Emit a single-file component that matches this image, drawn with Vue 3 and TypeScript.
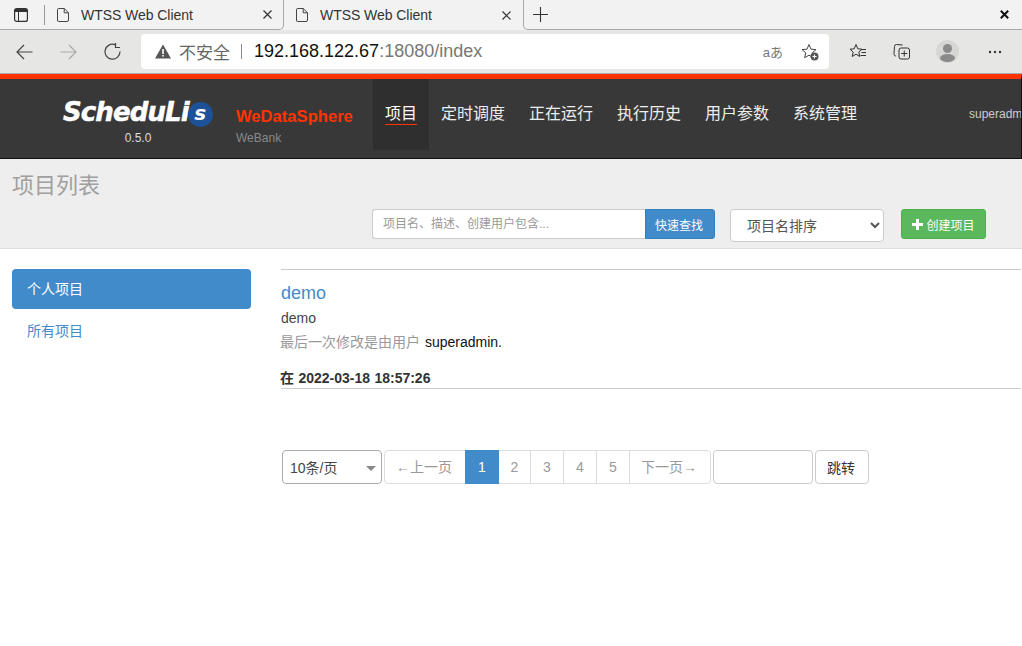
<template>
  <div class="page">
    <div class="tabstrip">
      <div class="tabs-left">
        <svg class="tabs-ic" width="14" height="14" viewBox="0 0 14 14"><rect x=".6" y=".6" width="12.8" height="12.8" rx="2" fill="none" stroke="#333" stroke-width="1.200" /><rect x="1" y="1" width="12" height="3" fill="#333" /><path d="M4.500 4v9.500" stroke="#333" stroke-width="1" /></svg>
        <span class="tab-sep"></span>
        <div class="tab">
          <svg width="12" height="14" viewBox="0 0 12 14"><path d="M1.800.5h5.400l4.300 4.300v7.200a1.500 1.500 0 0 1-1.500 1.500H1.800A1.300 1.300 0 0 1 .5 12V1.800A1.300 1.300 0 0 1 1.800.5zM7.200.5v4.300h4.300" fill="none" stroke="#444" stroke-width="1" /></svg>
          <span class="tab-title">WTSS Web Client</span>
          <svg width="9" height="9" viewBox="0 0 9 9"><path d="M.5.5l8 8M8.500.5l-8 8" stroke="#333" stroke-width="1.200" /></svg>
        </div>
      </div>
      <div class="tab active">
        <svg width="12" height="14" viewBox="0 0 12 14"><path d="M1.800.5h5.400l4.300 4.300v7.200a1.500 1.500 0 0 1-1.500 1.500H1.800A1.300 1.300 0 0 1 .5 12V1.800A1.300 1.300 0 0 1 1.800.5zM7.200.5v4.300h4.300" fill="none" stroke="#444" stroke-width="1" /></svg>
        <span class="tab-title">WTSS Web Client</span>
        <svg width="9" height="9" viewBox="0 0 9 9"><path d="M.5.5l8 8M8.500.5l-8 8" stroke="#333" stroke-width="1.200" /></svg>
      </div>
      <div class="tabs-right">
        <svg class="new-tab" width="15" height="15" viewBox="0 0 15 15"><path d="M7.500 0v15M0 7.500h15" stroke="#333" stroke-width="1.100" /></svg>
        <svg class="win-x" width="9" height="9" viewBox="0 0 9 9"><path d="M.8.8l7.400 7.400M8.200.8L.8 8.200" stroke="#111" stroke-width="2" /></svg>
      </div>
    </div>

    <div class="toolbar">
      <svg class="tb-ic first" width="17" height="16" viewBox="0 0 17 16"><path d="M16.500 8H1M8 1L1 8l7 7" fill="none" stroke="#444" stroke-width="1.200" /></svg>
      <svg class="tb-ic" width="17" height="16" viewBox="0 0 17 16"><path d="M.5 8H16M9 1l7 7-7 7" fill="none" stroke="#aaa" stroke-width="1.200" /></svg>
      <svg class="tb-ic" width="17" height="17" viewBox="0 0 17 17"><path d="M11 1.600A7.500 7.500 0 1 0 16 8.500M11.500 0v4.500H16" fill="none" stroke="#444" stroke-width="1.200" /></svg>
      <div class="address">
        <svg width="16" height="15" viewBox="0 0 16 15"><path d="M8 .5L16 14.500H0z" fill="#555" /><path d="M7.200 5h1.600v5H7.200zM7.200 11h1.600v1.600H7.200z" fill="#fff" /></svg>
        <span class="insecure">不安全</span>
        <span class="addr-sep"></span>
        <span class="url">192.168.122.67<span class="url-dim">:18080/index</span></span>
        <span class="translate">aあ</span>
        <svg class="addr-star" width="18" height="18" viewBox="0 0 18 18"><path d="M8 1.500l2 4.700 5 .4-3.800 3.300 1.200 4.800L8 12.200l-4.400 2.500 1.200-4.800L1 6.600l5-.4z" fill="none" stroke="#444" stroke-width="1" /><circle cx="13.500" cy="13.500" r="4" fill="#555" /><path d="M11.500 13.500h4M13.500 11.500v4" stroke="#fff" stroke-width="1" /></svg>
      </div>
      <svg class="tb-ic fav" width="18" height="18" viewBox="0 0 18 18"><path d="M7 1.500l1.800 4.300 4.200.4-3.200 2.900 1 4.400L7 11.200l-3.800 2.300 1-4.400L1 6.200l4.200-.4z" fill="none" stroke="#333" stroke-width="1" /><path d="M12 6.500h5M12.500 9.500h4.500M11.500 12.500h5.500" stroke="#333" stroke-width="1" /></svg>
      <svg class="tb-ic coll" width="18" height="18" viewBox="0 0 18 18"><path d="M3 13A2 2 0 0 1 1 10.500L1.500 3.500A2 2 0 0 1 3.500 1.500l6 .5" fill="none" stroke="#333" stroke-width="1" /><rect x="6" y="5" width="10.500" height="11" rx="2" fill="none" stroke="#333" stroke-width="1" /><path d="M11.250 7.500v6M8.250 10.500h6" stroke="#333" stroke-width="1" /></svg>
      <svg class="avatar" width="23" height="23" viewBox="0 0 23 23"><circle cx="11.500" cy="11.500" r="11.500" fill="#d6d6d4" /><circle cx="11.500" cy="8.500" r="4.500" fill="#8a8a8a" /><ellipse cx="11.500" cy="18" rx="7.500" ry="4" fill="#8a8a8a" /></svg>
      <svg class="more" width="14" height="4" viewBox="0 0 14 4"><circle cx="2" cy="2" r="1.200" fill="#333" /><circle cx="7" cy="2" r="1.200" fill="#333" /><circle cx="12" cy="2" r="1.200" fill="#333" /></svg>
    </div>

    <header class="navbar">
      <div class="brand">
        <div class="logo"><span class="logo-text">ScheduLi</span><span class="logo-s">s</span></div>
        <div class="version">0.5.0</div>
      </div>
      <div class="org">
        <div class="org-name">WeDataSphere</div>
        <div class="org-sub">WeBank</div>
      </div>
      <nav class="nav">
        <a v-for="(item, i) in navItems" :key="item" class="nav-item" :class="{ active: i === 0 }"><span>{{ item }}</span></a>
      </nav>
      <div class="user">superadmin</div>
    </header>

    <section class="page-head">
      <h1>项目列表</h1>
      <div class="head-actions">
        <div class="search">
          <input class="search-input" placeholder="项目名、描述、创建用户包含..." />
          <button class="search-btn">快速查找</button>
        </div>
        <select class="sort"><option>项目名排序</option></select>
        <button class="create-btn"><span class="plus"></span>创建项目</button>
      </div>
    </section>

    <section class="content">
      <aside class="side">
        <a class="side-item active">个人项目</a>
        <a class="side-item">所有项目</a>
      </aside>
      <main class="main">
        <div class="project">
          <a class="p-name">demo</a>
          <div class="p-desc">demo</div>
          <div class="p-mod">最后一次修改是由用户 <span class="p-user">superadmin.</span></div>
          <div class="p-time">在 2022-03-18 18:57:26</div>
        </div>
        <div class="pager-row">
          <div class="size-select">10条/页<i class="caret"></i></div>
          <div class="pager">
            <a class="pg wide">←上一页</a>
            <a v-for="p in pages" :key="p" class="pg" :class="{ on: p === 1 }">{{ p }}</a>
            <a class="pg wide last">下一页→</a>
          </div>
          <input class="jump-input" />
          <button class="jump-btn">跳转</button>
        </div>
      </main>
    </section>
  </div>
</template>

<script setup lang="ts">
const navItems: string[] = ['项目', '定时调度', '正在运行', '执行历史', '用户参数', '系统管理']
const pages: number[] = [1, 2, 3, 4, 5]
</script>

<style>
html, body { margin: 0; background: #fff; overflow: hidden; }
</style>

<style scoped>
* { box-sizing: border-box; }
.page {
  width: 1022px;
  height: 646px;
  overflow: hidden;
  font-family: "Liberation Sans", "Noto Sans CJK SC", sans-serif;
  font-size: 14px;
  color: #333;
  background: #fff;
}

/* browser chrome */
.tabstrip {
  height: 30px;
  display: flex;
  background: #f2f2f2;
}
.tabs-left {
  width: 284px;
  height: 30px;
  flex: none;
  display: flex;
  align-items: center;
  padding-left: 14px;
  border-bottom: 1px solid #a8a8a8;
  border-right: 1px solid #a8a8a8;
  border-bottom-right-radius: 5px;
}
.tabs-right {
  flex: 1;
  height: 30px;
  display: flex;
  align-items: center;
  border-bottom: 1px solid #a8a8a8;
  border-left: 1px solid #a8a8a8;
  border-bottom-left-radius: 5px;
}
.tab-sep { width: 1px; height: 20px; background: #999; margin-left: 16px; }
.tab {
  width: 238px;
  height: 29px;
  display: flex;
  align-items: center;
  padding: 0 11px 0 12px;
  font-size: 14px;
  color: #333;
  flex: none;
}
.tab.active {
  width: 239px;
  height: 30px;
  padding-right: 12px;
}
.tab-title { margin-left: 12px; flex: 1; letter-spacing: -.05px; }
.new-tab { margin-left: 9px; }
.win-x { margin-left: auto; margin-right: 13px; }
.toolbar {
  height: 44px;
  display: flex;
  align-items: center;
  background: #e6e6e4;
  border-bottom: 1px solid #aaa;
}
.tb-ic { flex: none; margin-left: 27px; }
.tb-ic.first { margin-left: 16px; }
.address {
  width: 688px;
  height: 35px;
  margin-left: 20px;
  background: #fff;
  border-radius: 4px;
  display: flex;
  align-items: center;
  padding-left: 14px;
}
.insecure { margin-left: 8px; font-size: 17px; color: #666; }
.addr-sep { width: 1px; height: 15px; background: #888; margin: 0 12px 0 11px; }
.url { font-size: 18px; color: #111; }
.url-dim { color: #777; }
.translate { margin-left: auto; font-size: 13px; color: #777; }
.addr-star { margin: 0 10px 0 18px; }
.tb-ic.fav { margin-left: 20px; }
.tb-ic.coll { margin-left: 26px; }
.avatar { margin-left: 25px; }
.more { margin-left: 29px; }

/* site navbar */
.navbar {
  height: 85px;
  background: #383838;
  border-top: 5px solid #ff3300;
  border-bottom: 1px solid #111;
  border-right: 1px solid #111;
  display: flex;
  align-items: flex-start;
}
.brand { width: 150px; margin-left: 63px; flex: none; }
.logo { height: 35px; display: flex; align-items: center; margin-top: 15px; }
.logo-text {
  font-family: "DejaVu Sans", sans-serif;
  font-weight: 700;
  font-style: italic;
  font-size: 26px;
  letter-spacing: -.9px;
  color: #fff;
  -webkit-text-stroke: .5px #fff;
}
.logo-s {
  width: 25px;
  height: 25px;
  margin: 5px 0 0 -1px;
  flex: none;
  border-radius: 50%;
  background: #1d5299;
  color: #fff;
  font-family: "DejaVu Sans", sans-serif;
  font-weight: 700;
  font-style: italic;
  font-size: 20px;
  line-height: 23px;
  text-align: center;
}
.version { text-align: center; font-size: 12px; color: #ddd; margin-top: 2px; }
.org { width: 137px; margin-left: 23px; flex: none; padding-top: 28px; }
.org-name { font-weight: 700; font-size: 16.6px; line-height: 20px; color: #ff3300; }
.org-sub { font-size: 12px; color: #888; margin-top: 4px; }
.nav { display: flex; }
.nav-item {
  height: 71px;
  padding: 24px 12px 0;
  font-size: 16px;
  line-height: 21px;
  color: #eee;
}
.nav-item.active { background: #2f2f2f; color: #fff; }
.nav-item.active span { display: block; border-bottom: 1px solid #ff3300; }
.user { margin-left: auto; width: 52px; flex: none; padding-top: 28px; font-size: 12px; color: #ccc; white-space: nowrap; overflow: hidden; }

/* page heading */
.page-head {
  height: 90px;
  background: #eee;
  border-bottom: 1px solid #ddd;
  padding: 13px 0 0 12px;
}
.page-head h1 { margin: 0; font-size: 22px; line-height: 28px; font-weight: 400; color: #a0a0a0; }
.head-actions { display: flex; align-items: flex-start; margin-top: 9px; margin-left: 360px; }
.search { display: flex; width: 343px; }
.search-input {
  flex: 1;
  min-width: 0;
  height: 30px;
  border: 1px solid #ccc;
  border-right: none;
  border-radius: 3px 0 0 3px;
  padding: 0 10px;
  font: 12px "Liberation Sans", "Noto Sans CJK SC", sans-serif;
  background: #fff;
}
.search-input::placeholder { color: #999; }
.search-btn {
  width: 70px;
  height: 30px;
  border: 1px solid #357ebd;
  background: #428bca;
  color: #fff;
  border-radius: 0 3px 3px 0;
  font: 12px "Liberation Sans", "Noto Sans CJK SC", sans-serif;
  padding: 0 2px 0 0;
}
.sort {
  width: 154px;
  height: 33px;
  margin-left: 15px;
  padding: 0 12px;
  border: 1px solid #ccc;
  border-radius: 4px;
  background: #fff;
  color: #555;
  font: 14px "Liberation Sans", "Noto Sans CJK SC", sans-serif;
}
.create-btn {
  width: 85px;
  height: 30px;
  margin-left: 17px;
  border: 1px solid #4cae4c;
  border-radius: 3px;
  background: #5cb85c;
  color: #fff;
  font: 12px "Liberation Sans", "Noto Sans CJK SC", sans-serif;
  padding: 0;
  display: flex;
  align-items: center;
  justify-content: center;
}
.plus {
  width: 11px;
  height: 11px;
  margin-right: 3px;
  background:
    linear-gradient(#fff, #fff) center / 11px 3px no-repeat,
    linear-gradient(#fff, #fff) center / 3px 11px no-repeat;
}

/* content */
.content { display: flex; padding: 20px 0 0 12px; }
.side { width: 239px; flex: none; }
.side-item {
  display: block;
  height: 40px;
  line-height: 40px;
  padding-left: 15px;
  border-radius: 4px;
  color: #428bca;
  font-size: 14px;
}
.side-item.active { background: #428bca; color: #fff; }
.side-item + .side-item { margin-top: 2px; }
.main { margin-left: 30px; width: 740px; flex: none; }
.project { border-top: 1px solid #ccc; border-bottom: 1px solid #ccc; height: 120px; }
.p-name { display: block; margin-top: 13px; font-size: 18px; line-height: 20px; color: #428bca; }
.p-desc { margin-top: 5px; line-height: 20px; color: #444; }
.p-mod { margin-top: 4px; margin-left: -1px; line-height: 20px; color: #999; font-size: 14px; }
.p-user { color: #111; margin-left: 1px; }
.p-time { margin-top: 16px; margin-left: -1px; font-weight: 700; line-height: 20px; word-spacing: .5px; }
.pager-row { display: flex; align-items: stretch; height: 34px; margin-top: 61px; margin-left: 1px; }
.size-select {
  width: 100px;
  border: 1px solid #aaa;
  border-radius: 4px;
  padding: 0 7px;
  line-height: 34px;
  color: #444;
  position: relative;
}
.caret {
  position: absolute;
  right: 5px;
  top: 15px;
  border: 5px solid transparent;
  border-top-color: #888;
  border-bottom: none;
}
.pager {
  display: flex;
  margin-left: 2px;
  border: 1px solid #ddd;
  border-radius: 4px;
  width: 327px;
}
.pg {
  width: 33px;
  border-right: 1px solid #ddd;
  text-align: center;
  line-height: 32px;
  color: #999;
}
.pg.wide { width: 80px; border-right: none; padding-right: 2px; }
.pg.last { flex: 1; }
.pg.on { background: #428bca; color: #fff; border-right: none; width: 34px; margin: -1px 0; line-height: 34px; }
.pg.on + .pg { width: 32px; }
.jump-input {
  width: 100px;
  margin-left: 2px;
  border: 1px solid #ccc;
  border-radius: 4px;
  background: #fff;
}
.jump-btn {
  width: 54px;
  margin-left: 2px;
  border: 1px solid #ccc;
  border-radius: 4px;
  background: #fff;
  color: #333;
  font: 14px "Liberation Sans", "Noto Sans CJK SC", sans-serif;
  padding: 0 2px 0 0;
}
</style>
